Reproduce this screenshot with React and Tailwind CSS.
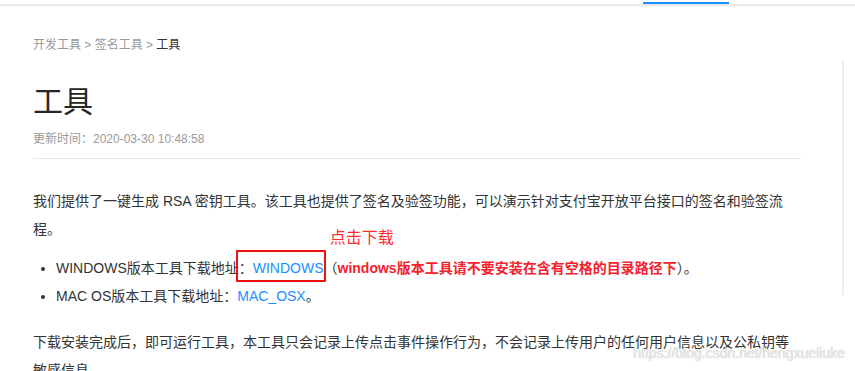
import React from 'react';

const font = { fontFamily: '"Liberation Sans", "Noto Sans CJK SC", sans-serif' };

export default function App() {
  return (
    <div className="relative w-[855px] h-[371px] overflow-hidden bg-white text-[#333]" style={font}>
      {/* cut-off top nav */}
      <div className="h-[5px] flex items-end pl-[643px] shadow-[0_1px_2px_rgba(0,0,0,0.12)] border-b border-[#e8e8e8]">
        <div className="w-[86px] h-[2px] bg-[#1890ff]" />
      </div>

      {/* right column border */}
      <div className="absolute left-[842px] top-[60px] w-[2px] h-[235px] bg-[#eeeeee]" />

      <div className="pl-[33px] w-[801px]">
        <div className="mt-[30px] text-[12px] leading-[20px] text-[#999]">
          开发工具 &gt; 签名工具 &gt; <span className="text-[#333]">工具</span>
        </div>

        <h1 className="mt-[29px] text-[30px] leading-[36px] font-normal text-[#262626]">工具</h1>

        <div className="mt-[11px] text-[12px] leading-[16px] text-[#999]">更新时间：2020-03-30 10:48:58</div>

        <div className="mt-[11px] h-px bg-[#e8e8e8]" />

        <p className="mt-[28px] text-[14px] leading-[28px] max-w-[760px]">
          我们提供了一键生成 RSA 密钥工具。该工具也提供了签名及验签功能，可以演示针对支付宝开放平台接口的签名和验签流程。
        </p>

        <ul className="mt-[11px] list-disc pl-[23px] text-[14px] leading-[28px]">
          <li>
            WINDOWS版本工具下载地址：
            <span className="relative inline-block text-[#1890ff]">
              WINDOWS
              <span className="absolute -left-[17px] -right-[2px] -top-[4px] bottom-0 border-2 border-[#f01010] rounded-[1px]" />
              <span className="absolute left-[77px] -top-[24px] whitespace-nowrap text-[16px] leading-none text-[#ff2d2d]">点击下载</span>
            </span>
            （<span className="font-bold text-[#f5222d]">windows版本工具请不要安装在含有空格的目录路径下</span>）。
          </li>
          <li>
            MAC OS版本工具下载地址：<span className="text-[#1890ff]">MAC_OSX</span>。
          </li>
        </ul>

        <p className="mt-[18px] text-[14px] leading-[28px] max-w-[760px]">
          下载安装完成后，即可运行工具，本工具只会记录上传点击事件操作行为，不会记录上传用户的任何用户信息以及公私钥等敏感信息。
        </p>
      </div>

      {/* watermark */}
      <div className="absolute right-[10px] top-[344px] text-[14px] leading-[18px] text-[rgba(240,240,240,0.9)] [text-shadow:0_0_1px_rgba(120,120,120,0.6)]">
        https://blog.csdn.net/hengxueliuke
      </div>
    </div>
  );
}
